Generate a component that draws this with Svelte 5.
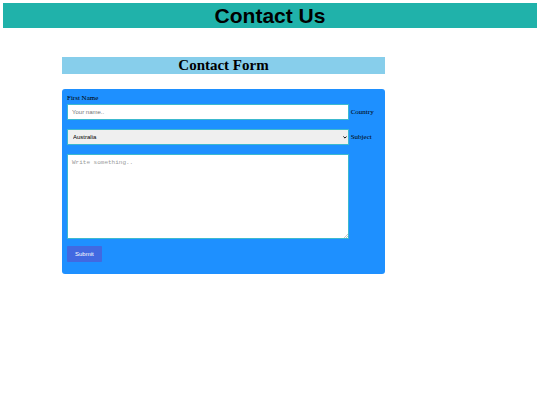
<script>
  let name = $state('');
  let country = $state('australia');
  let subject = $state('');
</script>

<header><h1>Contact Us</h1></header>

<main>
  <h2>Contact Form</h2>

  <form onsubmit={(e) => e.preventDefault()}>
    <label class="first" for="fname">First Name</label>
    <div class="row">
      <input class="field" id="fname" type="text" placeholder="Your name.." bind:value={name} />
      <label for="country">Country</label>
    </div>
    <div class="row">
      <div class="select field">
        <select id="country" bind:value={country}>
          <option value="australia">Australia</option>
          <option value="canada">Canada</option>
          <option value="usa">USA</option>
        </select>
        <svg class="arrow" viewBox="0 0 4 3" aria-hidden="true">
          <path d="M0.4 0.5 2 2.1 3.6 0.5" fill="none" stroke="#000" stroke-width="1" />
        </svg>
      </div>
      <label for="subject">Subject</label>
    </div>
    <div class="message field">
      <textarea id="subject" placeholder="Write something.." bind:value={subject}></textarea>
      <svg class="grip" viewBox="0 0 4 4" aria-hidden="true">
        <path d="M0 4 4 0M2 4 4 2" fill="none" stroke="#888" stroke-width="0.5" />
      </svg>
    </div>
    <button type="submit">Submit</button>
  </form>
</main>

<style>
  :global(body) {
    margin: 0;
    background: #fff;
    color: #000;
    font-family: "Liberation Serif", "Times New Roman", serif;
  }

  header {
    margin: 3px;
    background: lightseagreen;
  }

  h1 {
    margin: 0;
    font: bold 21px/25px "Liberation Sans", Arial, sans-serif;
    text-align: center;
  }

  main {
    margin: 29px 155px 0 62px;
  }

  h2 {
    margin: 0 0 15px;
    background: skyblue;
    font-size: 15px;
    line-height: 17px;
    text-align: center;
  }

  form {
    padding: 5px 5px 12px;
    border-radius: 3px;
    background: dodgerblue;
  }

  label {
    font-size: 7px;
    line-height: 8px;
  }

  .first {
    display: block;
    margin-bottom: 2px;
  }

  .row {
    display: flex;
    align-items: center;
    gap: 2px;
    margin-bottom: 9px;
  }

  .field {
    flex: none;
    box-sizing: border-box;
    width: 90%;
  }

  input,
  select,
  textarea {
    display: block;
    box-sizing: border-box;
    height: 16px;
    margin: 0;
    padding: 0 4px;
    border: 1px solid #3cb9cf;
    border-radius: 0;
    background: #fff;
    color: #000;
    font: 6px/8px "Liberation Sans", Arial, sans-serif;
  }

  .select,
  .message {
    position: relative;
  }

  select {
    width: 100%;
    padding: 0 5px;
    background: #efefef;
    appearance: none;
  }

  .arrow {
    position: absolute;
    top: 7px;
    right: 2px;
    width: 4px;
    height: 3px;
    pointer-events: none;
  }

  textarea {
    width: 100%;
    height: 85px;
    padding: 4px;
    font-family: "Liberation Mono", "Courier New", monospace;
    resize: none;
  }

  input::placeholder {
    color: #757575;
  }

  textarea::placeholder {
    color: #999;
  }

  .grip {
    position: absolute;
    right: 1px;
    bottom: 1px;
    width: 4px;
    height: 4px;
    pointer-events: none;
  }

  button {
    display: block;
    margin: 7px 0 0;
    padding: 4px 8px;
    border: 0;
    border-radius: 1px;
    background: royalblue;
    color: #fff;
    font: 6px/8px "Liberation Sans", Arial, sans-serif;
    cursor: pointer;
  }
</style>
